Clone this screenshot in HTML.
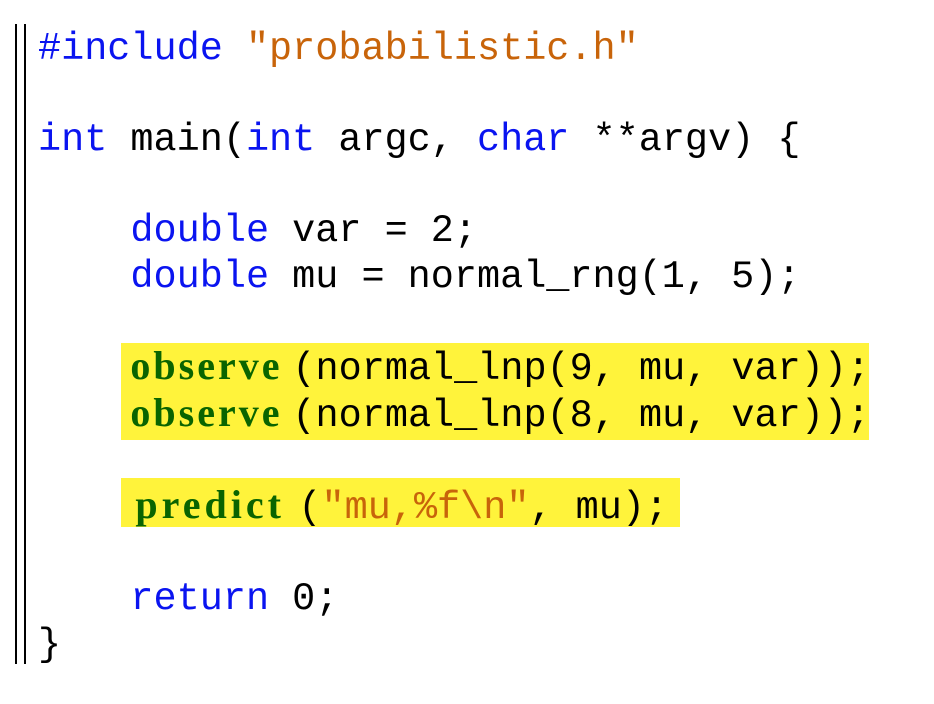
<!DOCTYPE html>
<html><head><meta charset="utf-8"><style>
html,body{margin:0;padding:0;background:#fff;width:934px;height:704px;overflow:hidden;position:relative}
.b{position:absolute;top:24px;width:2px;height:640px;background:#000}
.hl{position:absolute;background:#fff33b}
pre{position:absolute;left:38px;top:27px;margin:0;font-family:"Liberation Mono",monospace;font-size:38.5px;line-height:45.6px;color:#000}
.k{color:#0a14f0}.s{color:#c8640a}
.o{font-family:"Liberation Serif",serif;font-weight:bold;color:#0a6400;font-size:40px;line-height:40px;letter-spacing:3px;display:inline-block;width:162px}
.p{font-family:"Liberation Serif",serif;font-weight:bold;color:#0a6400;font-size:40px;line-height:40px;letter-spacing:4px;display:inline-block;width:163px;padding-left:5px}
</style></head><body>
<div class="b" style="left:15px"></div><div class="b" style="left:24px"></div>
<div class="hl" style="left:121px;top:343px;width:748px;height:97px"></div>
<div class="hl" style="left:121px;top:478px;width:559px;height:49px"></div>
<pre><span class="k">#include</span> <span class="s">"probabilistic.h"</span>

<span class="k">int</span> main(<span class="k">int</span> argc, <span class="k">char</span> **argv) {

    <span class="k">double</span> var = 2;
    <span class="k">double</span> mu = normal_rng(1, 5);

    <span class="o">observe</span>(normal_lnp(9, mu, var));
    <span class="o">observe</span>(normal_lnp(8, mu, var));

    <span class="p">predict</span>(<span class="s">"mu,%f\n"</span>, mu);

    <span class="k">return</span> 0;
}</pre>
</body></html>
